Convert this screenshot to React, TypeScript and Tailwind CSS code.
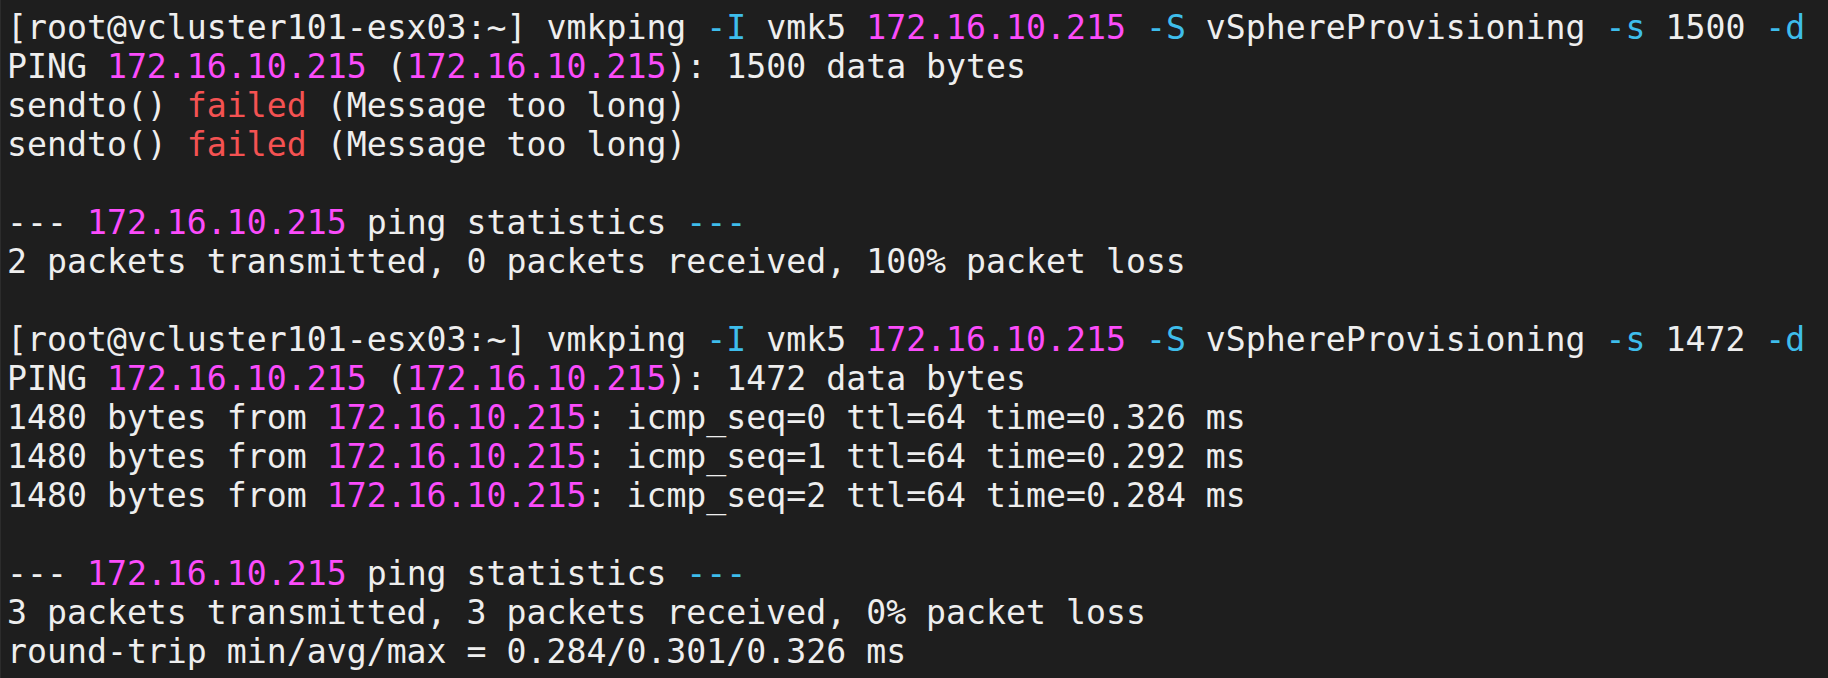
type Seg = [string, string?];

const M = "text-[#fb4cfb]";
const C = "text-[#3ebdeb]";
const R = "text-[#f45252]";
const IP = "172.16.10.215";

const prompt = (size: string): Seg[] => [
  ["[root@vcluster101-esx03:~] vmkping "],
  ["-I", C],
  [" vmk5 "],
  [IP, M],
  [" "],
  ["-S", C],
  [" vSphereProvisioning "],
  ["-s", C],
  [` ${size} `],
  ["-d", C],
];

const stats: Seg[] = [["--- "], [IP, M], [" ping statistics "], ["---", C]];

const reply = (seq: number, time: string): Seg[] => [
  ["1480 bytes from "],
  [IP, M],
  [`: icmp_seq=${seq} ttl=64 time=${time} ms`],
];

const lines: Seg[][] = [
  prompt("1500"),
  [["PING "], [IP, M], [" ("], [IP, M], ["): 1500 data bytes"]],
  [["sendto() "], ["failed", R], [" (Message too long)"]],
  [["sendto() "], ["failed", R], [" (Message too long)"]],
  [],
  stats,
  [["2 packets transmitted, 0 packets received, 100% packet loss"]],
  [],
  prompt("1472"),
  [["PING "], [IP, M], [" ("], [IP, M], ["): 1472 data bytes"]],
  reply(0, "0.326"),
  reply(1, "0.292"),
  reply(2, "0.284"),
  [],
  stats,
  [["3 packets transmitted, 3 packets received, 0% packet loss"]],
  [["round-trip min/avg/max = 0.284/0.301/0.326 ms"]],
];

export default function App() {
  return (
    <div className="h-[678px] w-full overflow-hidden bg-[#1e1e1e] border-l border-[#2c2c2c] pl-[6px] pt-[8px]">
      <pre className="font-['DejaVu_Sans_Mono','Liberation_Mono',monospace] text-[33.2px] leading-[39px] text-[#eeeeee] whitespace-pre">
        {lines.map((line, i) => (
          <div key={i} className="h-[39px]">
            {line.map(([text, cls], j) => (
              <span key={j} className={cls}>
                {text}
              </span>
            ))}
          </div>
        ))}
      </pre>
    </div>
  );
}
